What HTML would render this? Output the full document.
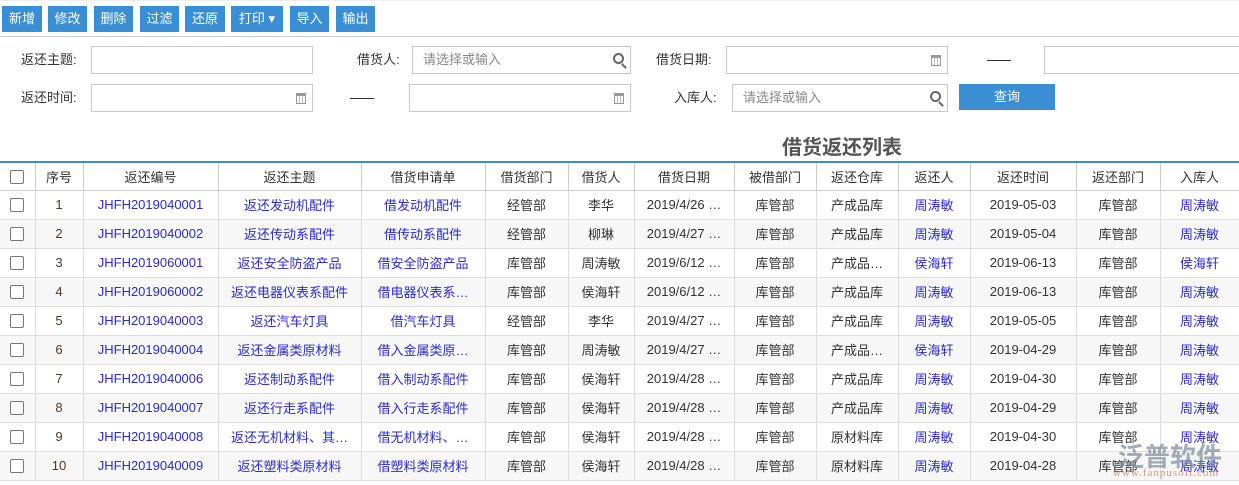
<!DOCTYPE html>
<html><head><meta charset="utf-8"><style>
*{box-sizing:border-box;margin:0;padding:0}
body{width:1239px;height:485px;overflow:hidden;background:#fff;font-family:"Liberation Sans","Noto Sans CJK SC",sans-serif;font-size:13px;color:#333;position:relative}
.topbar{position:absolute;left:0;top:0;width:1239px;height:37px;border-top:1px solid #eee;border-bottom:1px solid #ccc}
.btn{position:absolute;top:5px;height:26px;background:#3a8fd4;color:#fff;font-size:13px;line-height:26px;text-align:center}
.lbl{position:absolute;font-size:13px;color:#333;line-height:16px}
.inp{position:absolute;height:28px;border:1px solid #c8c8c8;background:#fff;font-size:13px;color:#888;line-height:26px;padding-left:10px}
.dash{position:absolute;width:24px;border-top:1px solid #333}
.cal{position:absolute;right:6px;top:8px;width:10px;height:11px;border:1px solid #999;border-top:3px solid #999;background:repeating-linear-gradient(90deg,#fff 0 2px,#bbb 2px 3px)}
.mag{position:absolute;right:6px;top:6px;width:11px;height:11px;border:2px solid #666;border-radius:50%}
.mag:after{content:"";position:absolute;left:8px;top:8px;width:2px;height:6px;background:#666;transform:rotate(-45deg)}
.title{position:absolute;left:782px;top:131px;font-size:20px;font-weight:bold;color:#555}
table{position:absolute;left:0;top:161px;width:1239px;border-collapse:collapse;table-layout:fixed;border-top:2px solid #3a8fd4}
td,th{height:29px;border:1px solid #ddd;text-align:center;font-weight:normal;white-space:nowrap;overflow:hidden;font-size:13px}
th{border-color:#ccc;height:28px}
tr:nth-child(odd) td{background:#f7f7f7}
tr.h th{background:#fff}
td:first-child,th:first-child{border-left:none}
.cb{display:inline-block;width:14px;height:14px;border:1px solid #777;border-radius:2px;vertical-align:middle;background:#fff}
.b{color:#2a2ad6}
.n{color:#4a3a2a}
.wm{position:absolute;left:1118px;top:437px;font-size:26px;color:#7a8a9a;opacity:.7;font-weight:bold}
.wm2{position:absolute;left:1113px;top:467px;font-size:11px;color:#d08060;opacity:.8;letter-spacing:1px;font-family:"Liberation Serif",serif}
</style></head><body>
<div class="topbar">
<div class="btn" style="left:2px;width:40px">新增</div>
<div class="btn" style="left:48px;width:39px">修改</div>
<div class="btn" style="left:94px;width:39px">删除</div>
<div class="btn" style="left:140px;width:39px">过滤</div>
<div class="btn" style="left:185px;width:40px">还原</div>
<div class="btn" style="left:231px;width:52px">打印 ▾</div>
<div class="btn" style="left:290px;width:39px">导入</div>
<div class="btn" style="left:336px;width:39px">输出</div>
</div>
<div class="lbl" style="left:21px;top:52px">返还主题:</div>
<div class="inp" style="left:91px;top:46px;width:222px"></div>
<div class="lbl" style="left:357px;top:52px">借货人:</div>
<div class="inp" style="left:412px;top:46px;width:219px">请选择或输入<span class="mag"></span></div>
<div class="lbl" style="left:656px;top:52px">借货日期:</div>
<div class="inp" style="left:726px;top:46px;width:222px"><span class="cal"></span></div>
<div class="dash" style="left:987px;top:60px"></div>
<div class="inp" style="left:1044px;top:46px;width:200px"></div>
<div class="lbl" style="left:21px;top:90px">返还时间:</div>
<div class="inp" style="left:91px;top:84px;width:222px"><span class="cal"></span></div>
<div class="dash" style="left:350px;top:98px"></div>
<div class="inp" style="left:409px;top:84px;width:222px"><span class="cal"></span></div>
<div class="lbl" style="left:674px;top:90px">入库人:</div>
<div class="inp" style="left:732px;top:84px;width:216px">请选择或输入<span class="mag"></span></div>
<div class="btn" style="left:959px;top:84px;width:96px;height:26px">查询</div>
<div class="title">借货返还列表</div>
<table>
<colgroup><col style="width:35px"><col style="width:48px"><col style="width:135px"><col style="width:143px"><col style="width:124px"><col style="width:83px"><col style="width:66px"><col style="width:100px"><col style="width:82px"><col style="width:82px"><col style="width:72px"><col style="width:106px"><col style="width:84px"><col style="width:79px"></colgroup>
<tr class="h"><th><span class="cb"></span></th><th>序号</th><th>返还编号</th><th>返还主题</th><th>借货申请单</th><th>借货部门</th><th>借货人</th><th>借货日期</th><th>被借部门</th><th>返还仓库</th><th>返还人</th><th>返还时间</th><th>返还部门</th><th>入库人</th></tr>
<tr><td><span class="cb"></span></td><td class="n">1</td><td class="b">JHFH2019040001</td><td class="b">返还发动机配件</td><td class="b">借发动机配件</td><td>经管部</td><td>李华</td><td>2019/4/26 …</td><td>库管部</td><td>产成品库</td><td class="b">周涛敏</td><td>2019-05-03</td><td>库管部</td><td class="b">周涛敏</td></tr>
<tr><td><span class="cb"></span></td><td class="n">2</td><td class="b">JHFH2019040002</td><td class="b">返还传动系配件</td><td class="b">借传动系配件</td><td>经管部</td><td>柳琳</td><td>2019/4/27 …</td><td>库管部</td><td>产成品库</td><td class="b">周涛敏</td><td>2019-05-04</td><td>库管部</td><td class="b">周涛敏</td></tr>
<tr><td><span class="cb"></span></td><td class="n">3</td><td class="b">JHFH2019060001</td><td class="b">返还安全防盗产品</td><td class="b">借安全防盗产品</td><td>库管部</td><td>周涛敏</td><td>2019/6/12 …</td><td>库管部</td><td>产成品…</td><td class="b">侯海轩</td><td>2019-06-13</td><td>库管部</td><td class="b">侯海轩</td></tr>
<tr><td><span class="cb"></span></td><td class="n">4</td><td class="b">JHFH2019060002</td><td class="b">返还电器仪表系配件</td><td class="b">借电器仪表系…</td><td>库管部</td><td>侯海轩</td><td>2019/6/12 …</td><td>库管部</td><td>产成品库</td><td class="b">周涛敏</td><td>2019-06-13</td><td>库管部</td><td class="b">周涛敏</td></tr>
<tr><td><span class="cb"></span></td><td class="n">5</td><td class="b">JHFH2019040003</td><td class="b">返还汽车灯具</td><td class="b">借汽车灯具</td><td>经管部</td><td>李华</td><td>2019/4/27 …</td><td>库管部</td><td>产成品库</td><td class="b">周涛敏</td><td>2019-05-05</td><td>库管部</td><td class="b">周涛敏</td></tr>
<tr><td><span class="cb"></span></td><td class="n">6</td><td class="b">JHFH2019040004</td><td class="b">返还金属类原材料</td><td class="b">借入金属类原…</td><td>库管部</td><td>周涛敏</td><td>2019/4/27 …</td><td>库管部</td><td>产成品…</td><td class="b">侯海轩</td><td>2019-04-29</td><td>库管部</td><td class="b">周涛敏</td></tr>
<tr><td><span class="cb"></span></td><td class="n">7</td><td class="b">JHFH2019040006</td><td class="b">返还制动系配件</td><td class="b">借入制动系配件</td><td>库管部</td><td>侯海轩</td><td>2019/4/28 …</td><td>库管部</td><td>产成品库</td><td class="b">周涛敏</td><td>2019-04-30</td><td>库管部</td><td class="b">周涛敏</td></tr>
<tr><td><span class="cb"></span></td><td class="n">8</td><td class="b">JHFH2019040007</td><td class="b">返还行走系配件</td><td class="b">借入行走系配件</td><td>库管部</td><td>侯海轩</td><td>2019/4/28 …</td><td>库管部</td><td>产成品库</td><td class="b">周涛敏</td><td>2019-04-29</td><td>库管部</td><td class="b">周涛敏</td></tr>
<tr><td><span class="cb"></span></td><td class="n">9</td><td class="b">JHFH2019040008</td><td class="b">返还无机材料、其…</td><td class="b">借无机材料、…</td><td>库管部</td><td>侯海轩</td><td>2019/4/28 …</td><td>库管部</td><td>原材料库</td><td class="b">周涛敏</td><td>2019-04-30</td><td>库管部</td><td class="b">周涛敏</td></tr>
<tr><td><span class="cb"></span></td><td class="n">10</td><td class="b">JHFH2019040009</td><td class="b">返还塑料类原材料</td><td class="b">借塑料类原材料</td><td>库管部</td><td>侯海轩</td><td>2019/4/28 …</td><td>库管部</td><td>原材料库</td><td class="b">周涛敏</td><td>2019-04-28</td><td>库管部</td><td class="b">周涛敏</td></tr>
</table>
<div class="wm">泛普软件</div>
<div class="wm2">www.fanpusoft.com</div>
</body></html>
